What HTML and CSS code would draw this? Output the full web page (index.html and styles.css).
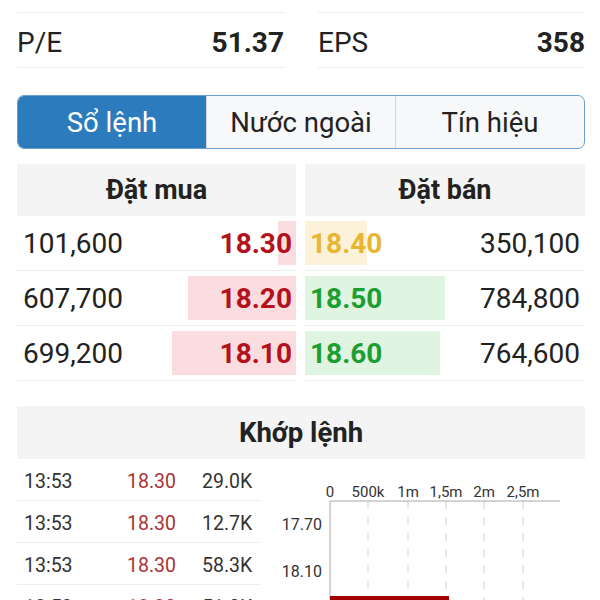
FILE: index.html
```html
<!DOCTYPE html>
<html lang="vi">
<head>
    <meta charset="UTF-8">
    <meta name="viewport" content="width=device-width, initial-scale=1.0">
    <title>Sổ lệnh</title>
    <link rel="stylesheet" href="styles.css">
</head>
<body>
<main class="screen">

    <section class="stats">
        <div class="stat"><span>P/E</span><b>51.37</b></div>
        <div class="stat"><span>EPS</span><b>358</b></div>
    </section>

    <nav class="tabs">
        <div class="tab active">Sổ lệnh</div>
        <div class="tab">Nước ngoài</div>
        <div class="tab">Tín hiệu</div>
    </nav>

    <section class="book">
        <div class="side buy">
            <div class="side-head">Đặt mua</div>
            <div class="level"><div class="level-in" style="--w:18px"><span class="qty">101,600</span><span class="price down">18.30</span></div></div>
            <div class="level"><div class="level-in" style="--w:108px"><span class="qty">607,700</span><span class="price down">18.20</span></div></div>
            <div class="level"><div class="level-in" style="--w:124px"><span class="qty">699,200</span><span class="price down">18.10</span></div></div>
        </div>
        <div class="side sell">
            <div class="side-head">Đặt bán</div>
            <div class="level"><div class="level-in ref" style="--w:62px"><span class="price ref">18.40</span><span class="qty">350,100</span></div></div>
            <div class="level"><div class="level-in" style="--w:140px"><span class="price up">18.50</span><span class="qty">784,800</span></div></div>
            <div class="level"><div class="level-in" style="--w:135px"><span class="price up">18.60</span><span class="qty">764,600</span></div></div>
        </div>
    </section>

    <section class="trades">
        <div class="trades-head">Khớp lệnh</div>
        <div class="trades-body">
            <div class="trade-list">
                <div class="trade"><span class="t-time">13:53</span><span class="t-price">18.30</span><span>29.0K</span></div>
                <div class="trade"><span class="t-time">13:53</span><span class="t-price">18.30</span><span>12.7K</span></div>
                <div class="trade"><span class="t-time">13:53</span><span class="t-price">18.30</span><span>58.3K</span></div>
                <div class="trade"><span class="t-time">13:53</span><span class="t-price">18.30</span><span>51.0K</span></div>
            </div>
            <svg class="chart" width="325" height="160" viewBox="0 0 325 160">
                <g class="grid">
                    <line x1="108" y1="42" x2="108" y2="160"/>
                    <line x1="148" y1="42" x2="148" y2="160"/>
                    <line x1="186" y1="42" x2="186" y2="160"/>
                    <line x1="224" y1="42" x2="224" y2="160"/>
                    <line x1="263" y1="42" x2="263" y2="160"/>
                </g>
                <line class="axis" x1="70" y1="42" x2="300" y2="42"/>
                <line class="axis" x1="70" y1="42" x2="70" y2="160"/>
                <g class="x-labels">
                    <text x="70" y="38">0</text>
                    <text x="108" y="38">500k</text>
                    <text x="148" y="38">1m</text>
                    <text x="186" y="38">1,5m</text>
                    <text x="224" y="38">2m</text>
                    <text x="263" y="38">2,5m</text>
                </g>
                <g class="y-labels">
                    <text x="62" y="71">17.70</text>
                    <text x="62" y="118">18.10</text>
                </g>
                <rect class="bar" x="70" y="137" width="119" height="30"/>
            </svg>
        </div>
    </section>

</main>
</body>
</html>
```

FILE: styles.css
```css
body {
    margin: 0;
    background-color: #fff;
    color: #222;
    font-family: Roboto, "Noto Sans", sans-serif;
}

.screen {
    padding: 12px 15px 0 17px;
}

/* chỉ số */
.stats {
    display: grid;
    grid-template-columns: 1fr 1fr;
    column-gap: 34px;
}

.stat {
    display: flex;
    justify-content: space-between;
    align-items: center;
    height: 50px;
    padding-top: 4px;
    border-top: 1px solid #ececec;
    border-bottom: 1px solid #ececec;
    font-size: 28px;
}

.stat b {
    font-weight: 700;
    color: #222;
}

/* tabs */
.tabs {
    display: flex;
    margin-top: 27px;
    height: 52px;
    border: 1px solid #6b9fcd;
    border-radius: 7px;
    overflow: hidden;
    background-color: #f7f8fa;
}

.tab {
    flex: 1;
    display: flex;
    align-items: center;
    justify-content: center;
    font-size: 27.5px;
    color: #222;
    border-left: 1px solid #d4d6da;
}

.tab:first-child {
    border-left: none;
}

.tab.active {
    background-color: #2c7cbd;
    color: #fff;
}

/* sổ lệnh */
.book {
    display: grid;
    grid-template-columns: 279px 280px;
    column-gap: 9px;
    margin-top: 15px;
}

.side-head {
    height: 52px;
    display: flex;
    align-items: center;
    justify-content: center;
    background-color: #f4f4f4;
    font-size: 27px;
    font-weight: 700;
}

.level {
    padding: 5px 0;
    border-bottom: 1px solid #ececec;
}

.level-in {
    height: 44px;
    display: flex;
    align-items: center;
    justify-content: space-between;
    font-size: 28px;
}

.buy .level-in {
    padding: 0 4px 0 6px;
    background: linear-gradient(to left, #fbdde0 var(--w), transparent var(--w));
}

.sell .level-in {
    padding: 0 5px;
    background: linear-gradient(to right, #e0f4e2 var(--w), transparent var(--w));
}

.sell .level-in.ref {
    background: linear-gradient(to right, #fcf2d9 var(--w), transparent var(--w));
}

.price {
    font-weight: 700;
}

.price.down {
    color: #b3121c;
}

.price.up {
    color: #1c9e31;
}

.price.ref {
    color: #e8b630;
}

/* khớp lệnh */
.trades {
    margin-top: 25px;
}

.trades-head {
    height: 53px;
    display: flex;
    align-items: center;
    justify-content: center;
    background-color: #f4f4f4;
    font-size: 27.5px;
    font-weight: 700;
}

.trades-body {
    display: flex;
}

.trade-list {
    width: 243px;
}

.trade {
    display: flex;
    align-items: center;
    height: 38px;
    padding-top: 3px;
    padding-left: 7px;
    border-bottom: 1px solid #ececec;
    font-size: 19.5px;
    color: #333;
}

.t-time {
    width: 103px;
}

.t-price {
    width: 75px;
    color: #a93434;
}

.chart {
    display: block;
    font-family: Roboto, sans-serif;
}

.chart .grid line {
    stroke: #cfcfcf;
    stroke-width: 1;
    stroke-dasharray: 8 8;
}

.chart .axis {
    stroke: #a8a8a8;
    stroke-width: 1;
}

.x-labels text {
    font-size: 15px;
    fill: #333;
    text-anchor: middle;
}

.y-labels text {
    font-size: 16px;
    fill: #333;
    text-anchor: end;
}

.chart .bar {
    fill: #a30000;
}
```
